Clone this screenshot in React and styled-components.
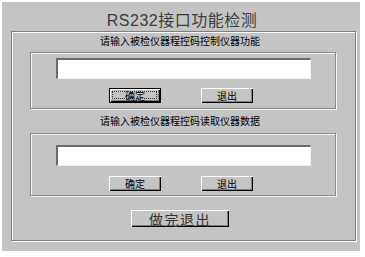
import React from "react";
import styled, { createGlobalStyle } from "styled-components";

const GlobalStyle = createGlobalStyle`
    body {
        margin: 0;
        background: #ffffff;
        font-family: "Liberation Sans", "Noto Sans CJK SC", sans-serif;
    }
`;

const Window = styled.div`
    margin: 2px 0 0 2px;
    width: 358px;
    height: 249px;
    box-sizing: border-box;
    background: #c4c4c4;
    padding: 8px 4px 0 9px;
    display: flex;
    flex-direction: column;
`;

const Title = styled.div`
    height: 21px;
    line-height: 22px;
    font-size: 16px;
    color: #3c3c3c;
    text-align: center;
    letter-spacing: 0.5px;
    padding-right: 3px;
`;

const OuterGroup = styled.div`
    height: 210px;
    box-sizing: border-box;
    border: 1px solid #808080;
    box-shadow: inset 1px 1px 0 #fff, 1px 1px 0 #fff;
    padding: 3px 19px 0 18px;
    display: flex;
    flex-direction: column;
    align-items: stretch;
`;

const Label = styled.div`
    height: 12px;
    line-height: 12px;
    margin: ${(p) => p.$margin};
    font-family: "Noto Sans CJK SC", sans-serif;
    font-size: 10px;
    color: #000;
    text-align: center;
    padding-right: 6px;
`;

const Group = styled.div`
    border: 1px solid #8a8a8a;
    box-shadow: inset 1px 1px 0 #f4f4f4, 1px 1px 0 #f4f4f4;
    padding: ${(p) => p.$padTop}px 24px ${(p) => p.$padBottom}px 25px;
    display: flex;
    flex-direction: column;
    gap: ${(p) => p.$gap}px;
`;

const TextBox = styled.div`
    height: 21px;
    box-sizing: border-box;
    background: #fff;
    border-top: 2px solid #6a6a6a;
    border-left: 2px solid #6a6a6a;
    border-right: 1px solid #f0f0f0;
    border-bottom: 1px solid #f0f0f0;
`;

const ButtonRow = styled.div`
    display: flex;
    justify-content: center;
    gap: 40px;
    padding-right: 5px;
`;

const Button = styled.div`
    width: ${(p) => p.$w || 52}px;
    height: ${(p) => p.$h || 15}px;
    box-sizing: border-box;
    background: #c4c4c4;
    display: flex;
    align-items: center;
    justify-content: center;
    font-family: "Noto Sans CJK SC", sans-serif;
    font-size: ${(p) => p.$size || 10}px;
    letter-spacing: ${(p) => p.$spacing || 0}px;
    color: ${(p) => p.$color || "#000"};
    position: relative;
    border: ${(p) => (p.$default ? "1px solid #000" : "none")};
    box-shadow: inset 1px 1px 0 #fff, inset -1px -1px 0 #000, inset -2px -2px 0 #808080;
`;

const Focus = styled.span`
    position: absolute;
    inset: 2px 3px 3px 2px;
    border: 1px dotted #333;
`;

const ExitRow = styled.div`
    display: flex;
    justify-content: center;
    margin-top: 14px;
    padding-right: 6px;
`;

export default function App() {
    return (
        <>
            <GlobalStyle />
            <Window>
                <Title>RS232接口功能检测</Title>
                <OuterGroup>
                    <Label $margin="0 0 5px">请输入被检仪器程控码控制仪器功能</Label>
                    <Group $padTop={5} $padBottom={5} $gap={9}>
                        <TextBox />
                        <ButtonRow>
                            <Button $default>
                                <Focus />
                                确定
                            </Button>
                            <Button>退出</Button>
                        </ButtonRow>
                    </Group>
                    <Label $margin="6px 0 6px">请输入被检仪器程控码读取仪器数据</Label>
                    <Group $padTop={11} $padBottom={4} $gap={10}>
                        <TextBox />
                        <ButtonRow>
                            <Button>确定</Button>
                            <Button>退出</Button>
                        </ButtonRow>
                    </Group>
                    <ExitRow>
                        <Button $w={98} $h={17} $size={14} $spacing={1.5} $color="#333">做完退出</Button>
                    </ExitRow>
                </OuterGroup>
            </Window>
        </>
    );
}
